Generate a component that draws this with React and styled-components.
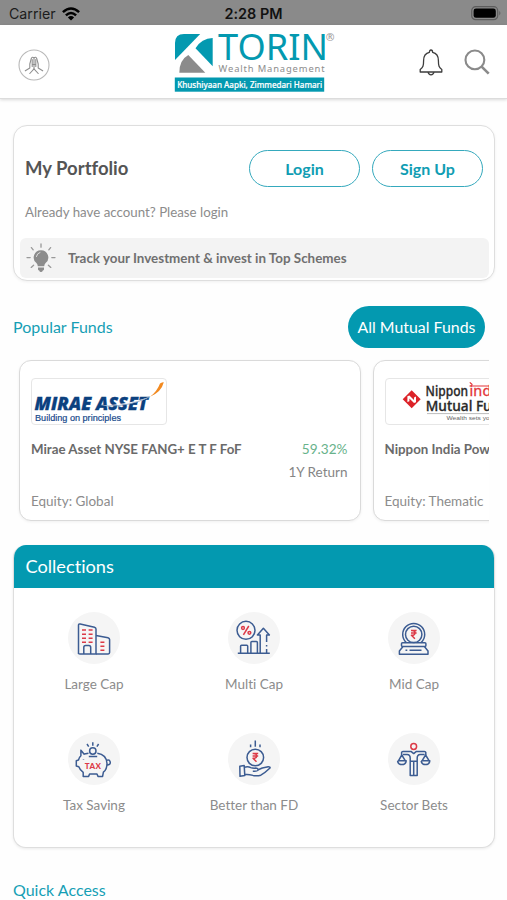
import React from "react";
import styled, { createGlobalStyle } from "styled-components";

const TEAL = "#0399b0";
const NAVY = "#3c5c92";
const RED = "#dc3a47";

const App = () => {
  return (
    <Screen>
      <GlobalStyle />
      <StatusBar>
        <Carrier>
          Carrier
          <WifiIcon />
        </Carrier>
        <Clock>2:28 PM</Clock>
        <BatteryIcon />
      </StatusBar>
      <Header>
        <ProfileBtn>
          <NamasteIcon />
        </ProfileBtn>
        <TorinLogo />
        <HeaderActions>
          <BellIcon />
          <SearchIcon />
        </HeaderActions>
      </Header>
      <Main>
        <Portfolio>
          <PortfolioTop>
            <PortfolioTitle>My Portfolio</PortfolioTitle>
            <OutlineBtn>Login</OutlineBtn>
            <OutlineBtn>Sign Up</OutlineBtn>
          </PortfolioTop>
          <Hint>Already have account? Please login</Hint>
          <Tip>
            <BulbIcon />
            Track your Investment &amp; invest in Top Schemes
          </Tip>
        </Portfolio>
        <SectionHead>
          <SectionTitle>Popular Funds</SectionTitle>
          <AllFundsBtn>All Mutual Funds</AllFundsBtn>
        </SectionHead>
        <FundList>
          {funds.map(({ name, type, value, Logo }) => (
            <FundCard key={name}>
              <LogoBox>
                <Logo />
              </LogoBox>
              <FundRow>
                <FundName>{name}</FundName>
                <FundReturn>{value}</FundReturn>
              </FundRow>
              <Period>1Y Return</Period>
              <FundType>{type}</FundType>
            </FundCard>
          ))}
        </FundList>
        <Collections>
          <CollectionsHead>Collections</CollectionsHead>
          <CollectionsGrid>
            {collections.map(({ label, Icon }) => (
              <Collection key={label}>
                <IconCircle>
                  <Icon />
                </IconCircle>
                <CollectionLabel>{label}</CollectionLabel>
              </Collection>
            ))}
          </CollectionsGrid>
        </Collections>
        <QuickTitle>Quick Access</QuickTitle>
      </Main>
    </Screen>
  );
};

/* header icons */

const WifiIcon = () => (
  <svg width="18" height="14" viewBox="0 0 18 14" fill="none" stroke="#000" strokeWidth="2.5">
    <path d="M.9 5.2Q9-2.2 17.1 5.2" />
    <path d="M3.9 8.4Q9 3.6 14.1 8.4" />
    <path d="M9 13.6L5.9 10.4Q9 7.8 12.1 10.4Z" fill="#000" stroke="none" />
  </svg>
);

const BatteryIcon = () => (
  <svg width="31" height="15" viewBox="0 0 31 15">
    <rect x=".7" y=".7" width="26" height="13" rx="4" fill="none" stroke="#5d5d5d" strokeWidth="1.2" />
    <rect x="2.6" y="2.6" width="22.2" height="9.2" rx="2.4" />
    <path d="M28.3 4.8Q30.5 7.2 28.3 9.6Z" fill="#5d5d5d" />
  </svg>
);

const NamasteIcon = () => (
  <svg width="32" height="32" viewBox="0 0 32 32" fill="none" stroke="#8f8f8f" strokeWidth="1.1" strokeLinecap="round" strokeLinejoin="round">
    <circle cx="16" cy="16" r="15" stroke="#b9b9b9" />
    <path d="M16 8.5V19.5M16 9Q14.2 7.2 13.3 9.5L11.8 15V19L7.3 21.8M16 9Q17.8 7.2 18.7 9.5L20.2 15V19L24.7 21.8" />
    <path d="M14.2 10.5V17.5M17.8 10.5V17.5M14.2 15.5H17.8" />
    <path d="M16 19.8L11.8 24.5M16 19.8L20.2 24.5" />
  </svg>
);

const TorinLogo = () => (
  <svg width="160" height="60" viewBox="0 0 160 60" overflow="visible">
    <path d="M1 28V11Q1 2 10 2H26.2Z" fill={TEAL} />
    <path d="M21.5 16.3Q27.5 6.3 38.7 6V34.3Z" fill={TEAL} />
    <path d="M14.3 23L31.3 40.7H5.3Q5.3 28 14.3 23Z" fill="#8b8b8b" />
    <text x="44" y="27.8" fontFamily="Noto Sans" fontSize="35.6" fill={TEAL} textLength="110" lengthAdjust="spacingAndGlyphs">
      TORIN
    </text>
    <text x="151.8" y="9" fontFamily="Noto Sans" fontSize="10.5" fill="#999">
      ®
    </text>
    <text x="44.6" y="40.2" fontFamily="Noto Sans" fontSize="9.4" fill="#8d8d8d" textLength="106">
      Wealth Management
    </text>
    <rect x=".8" y="45.5" width="149.4" height="14.2" fill={TEAL} />
    <text x="3.2" y="55.8" fontFamily="Noto Sans" fontSize="9" fontWeight="500" fill="#fff" stroke="#fff" strokeWidth=".2" textLength="145" lengthAdjust="spacingAndGlyphs">
      Khushiyaan Aapki, Zimmedari Hamari
    </text>
  </svg>
);

const BellIcon = () => (
  <svg width="24" height="27" viewBox="0 0 24 27" fill="none" stroke="#3d3d3d" strokeWidth="1.3" strokeLinejoin="round">
    <path d="M10.4 3.3Q10.4 1 12 1T13.6 3.3C18 4.2 19.4 7.5 19.4 11.5C19.4 17 20 18.5 22.8 20.5V23H1.2V20.5C4 18.5 4.6 17 4.6 11.5C4.6 7.5 6 4.2 10.4 3.3Z" />
    <path d="M9 23.2Q9.6 25.8 12 25.8T15 23.2" />
  </svg>
);

const SearchIcon = () => (
  <svg width="26" height="26" viewBox="0 0 26 26" fill="none" stroke="#8a8a8a" strokeWidth="2.1">
    <circle cx="10.9" cy="10.9" r="9.4" />
    <path d="M17.6 17.6L24.7 24.7" strokeWidth="2.6" />
  </svg>
);

const BulbIcon = () => (
  <svg width="30" height="30" viewBox="0 0 30 30" stroke="#999" strokeWidth="1.3" strokeLinecap="round">
    <path d="M15 7.2A7.2 7.2 0 0 0 10.4 20Q11.7 21.3 11.8 23.2H18.2Q18.3 21.3 19.6 20A7.2 7.2 0 0 0 15 7.2Z" fill="#8c8c8c" stroke="none" />
    <path d="M12 24.4H18V26.5Q17.6 27.5 16.8 27.5Q16.4 29 15 29T13.2 27.5Q12.4 27.5 12 26.5Z" fill="#8c8c8c" stroke="none" />
    <path d="M10.4 13.5Q11 10.2 14 9.4" fill="none" stroke="#ddd" strokeWidth="1" />
    <path d="M15 1V4.2M5.4 4.6L7.2 6.8M24.6 4.6L22.8 6.8M1 14.6H4.2M25.8 14.6H29M5.2 24.4L7.6 22.2M24.8 24.4L22.4 22.2" />
  </svg>
);

/* fund house logos */

const MiraeLogo = () => (
  <svg width="134" height="45" viewBox="0 0 134 45">
    <text x="2.5" y="31.2" fontFamily="Open Sans" fontSize="17.8" fontWeight="800" fontStyle="italic" fill="#0b417f" stroke="#0b417f" strokeWidth=".3" textLength="113.5" lengthAdjust="spacingAndGlyphs">
      MIRAE ASSET
    </text>
    <path d="M68 26.6Q96 26 118 17.8Q101 27.6 68 26.6Z" fill="#fff" />
    <path d="M74 27Q98 27.6 118 17.7" fill="none" stroke="#7892b2" strokeWidth=".7" />
    <path d="M118 17.8Q125 12.5 128 4.5Q131 2.8 131.8 3.3Q129.5 13 118 17.8Z" fill="#f28a21" />
    <text x="3" y="41.6" fontFamily="Liberation Sans" fontSize="8.8" fill="#174a8c" stroke="#174a8c" strokeWidth=".2" textLength="86" lengthAdjust="spacingAndGlyphs">
      Building on principles
    </text>
  </svg>
);

const NipponLogo = () => (
  <svg width="134" height="45" viewBox="0 0 134 45">
    <path d="M25.7 11.2L34.7 20.2L25.7 29.2L16.7 20.2Z" fill="#dc2329" />
    <path d="M21.4 23V17.2L23.4 16.4L28 21V18.4L30 17.6V23.2L28 24L23.4 19.6V22.2Z" fill="#fff" />
    <text x="39.6" y="17.4" fontFamily="Noto Sans" fontSize="13.6" fontWeight="500" fill="#292929" stroke="#292929" strokeWidth=".3" textLength="42.5" lengthAdjust="spacingAndGlyphs">
      Nippon
    </text>
    <text x="83.5" y="17.4" fontFamily="Noto Sans" fontSize="14.5" fill="#e33439" stroke="#e33439" strokeWidth=".3" textLength="34">
      india
    </text>
    <path d="M83.5 7H118M83.8 3.4L86.4 5.8" stroke="#e33439" strokeWidth="1.2" />
    <text x="39.8" y="31.8" fontFamily="Noto Sans" fontSize="13.6" fontWeight="500" fill="#292929" stroke="#292929" strokeWidth=".3" textLength="83" lengthAdjust="spacingAndGlyphs">
      Mutual Fund
    </text>
    <path d="M41 34.6H122" stroke="#aaa" strokeWidth=".8" />
    <text x="60.5" y="41.2" fontFamily="Liberation Sans" fontSize="6" fill="#666" textLength="60" lengthAdjust="spacingAndGlyphs">
      Wealth sets you free
    </text>
  </svg>
);

/* collection icons, all drawn on the 52px circle */

const LargeCapIcon = () => (
  <CapSvg viewBox="0 0 52 52">
    <path d="M10.5 42V13.2Q10.5 11.6 12.2 12L26.5 15.2Q28 15.6 28 17V42H11.8Q10.5 42 10.5 41" />
    <path d="M28 23.4L40 25.8Q41.6 26.2 41.6 27.6V40.6Q41.6 42 40.2 42H28" />
    <path d="M15.8 42V35.5Q15.8 33.6 17.6 33.6H20.9Q22.7 33.6 22.7 35.5V42" />
    <path
      stroke={RED}
      d="M14 18H18M20.6 18H24.6M14 22.2H18M20.6 22.2H24.6M14 26.3H18M20.6 26.3H24.6M14 30.3H18M20.6 30.3H24.6M32.4 30.2H36.4M32.4 34.2H36.4M32.4 38.2H36.4"
    />
  </CapSvg>
);

const MultiCapIcon = () => (
  <CapSvg viewBox="0 0 52 52">
    <circle cx="18" cy="18.3" r="9" />
    <path d="M9.8 41.3H41.8M12.6 41V34.2Q12.6 33.3 13.5 33.3H18.8Q19.7 33.3 19.7 34.2V41M22.9 41V30.5Q22.9 29.5 23.9 29.5H28.4Q29.4 29.5 29.4 30.5V41" />
    <path d="M32.2 41V23H29.4L35.4 16.3L41.4 23H38.6V30M38.6 33V34.5M38.6 37V41" />
    <path stroke={RED} d="M20.8 14L15.4 22.8" />
    <circle stroke={RED} cx="15" cy="16" r="1.4" />
    <circle stroke={RED} cx="21.4" cy="20.8" r="1.4" />
  </CapSvg>
);

const MidCapIcon = () => (
  <CapSvg viewBox="0 0 52 52">
    <path d="M18.3 30.6A11 11 0 1 1 33.1 30.6" />
    <circle cx="25.7" cy="22.4" r="8.2" />
    <rect x="13.5" y="30.8" width="24.4" height="3.8" rx="1" />
    <path d="M14.8 34.8L11.4 39V42.3H40V39L36.6 34.8M17.5 38.3H19.3M21.5 38.3H33.5" />
    <Rupee x={25.7} y={22.4} />
  </CapSvg>
);

const TaxIcon = () => (
  <CapSvg viewBox="0 0 52 52">
    <path d="M20.5 20.3Q17 20.8 16.2 21.2L12.9 17.2V22.8Q11 24.5 10.5 27L8.3 27.7V33L10.8 33.8Q12 37.3 15.2 39.4V43.4H20.6L21.6 41H29L30 43.4H34.6L35.4 39.2Q39 36.5 39 30.5Q38.5 21.5 29.3 20.3" />
    <path d="M39 27.2Q41.6 26.3 42.2 29T39 32M20.8 23.4H29.2" />
    <circle cx="24.8" cy="18" r="3.2" />
    <path d="M24.8 9.2V12.7M19 11L20.7 13.6M30.6 11L28.9 13.6M15.5 26.2V26.7" />
    <text x="16.8" y="35.7" fontFamily="Lato" fontSize="8" fontWeight="900" fill={RED} stroke="none" textLength="16.2">
      TAX
    </text>
  </CapSvg>
);

const FdIcon = () => (
  <CapSvg viewBox="0 0 52 52">
    <circle cx="27.3" cy="24.5" r="8.3" />
    <path d="M27.3 7.6V13.8M22.6 11.6V14.2M32 11.6V14.2" />
    <path d="M11.8 33.2L16.2 32.6L16.8 42.6L12 43.3Z" />
    <path d="M16.4 34.2Q20 33 22.8 34.6Q24.5 35.3 27.5 35.1Q30 35.1 30.2 37Q30 38.2 24.8 38.2M30.2 36.8L34.3 35L40.2 33.8Q42.5 33.7 42 35Q37.2 39.6 32.8 42.2Q29 43.3 25 42.4Q20 41 16.8 41.6" />
    <Rupee x={27.3} y={24.5} />
  </CapSvg>
);

const SectorIcon = () => (
  <CapSvg viewBox="0 0 52 52">
    <circle stroke={RED} cx="25.7" cy="13.5" r="2.9" />
    <path d="M13.6 22V19.4Q13.8 18.4 15 18.4H23L25.7 20.6L28.4 18.4H36.4Q37.6 18.4 37.8 19.4V22" />
    <path d="M15 21.4H19.2Q22.2 21.5 22.2 25V42.4H29.2V25Q29.2 21.5 32.2 21.4H36.6M22.2 28.2H29.2M25.7 29V42" />
    <path d="M13.8 22L10.4 27.8M13.8 22L17.4 27.8M9.6 27.8H18.2Q17.8 31.6 13.9 31.6T9.6 27.8M37.6 22L34 27.8M37.6 22L41.2 27.8M33.2 27.8H41.8Q41.4 31.6 37.5 31.6T33.2 27.8" />
  </CapSvg>
);

const Rupee = ({ x, y }) => (
  <path
    transform={`translate(${x} ${y})`}
    stroke={RED}
    strokeWidth="1.5"
    d="M-2.7-3.9H2.9M-2.7-1.5H2.9M-1.7-3.9Q1.5-3.9 1.3-1.4T-2.3.8L1.2 4.3"
  />
);

const funds = [
  { name: "Mirae Asset NYSE FANG+ E T F FoF", type: "Equity: Global", value: "59.32%", Logo: MiraeLogo },
  { name: "Nippon India Power & Infra", type: "Equity: Thematic", value: "52.18%", Logo: NipponLogo },
];

const collections = [
  { label: "Large Cap", Icon: LargeCapIcon },
  { label: "Multi Cap", Icon: MultiCapIcon },
  { label: "Mid Cap", Icon: MidCapIcon },
  { label: "Tax Saving", Icon: TaxIcon },
  { label: "Better than FD", Icon: FdIcon },
  { label: "Sector Bets", Icon: SectorIcon },
];

const GlobalStyle = createGlobalStyle`
  * {
    box-sizing: border-box;
  }
  body {
    margin: 0;
    overflow: hidden;
  }
`;

const Screen = styled.div`
  width: 100%;
  height: 900px;
  overflow: hidden;
  background: #fefefe;
  font-family: "Lato", sans-serif;
  font-variant-ligatures: none;
  color: #666;
`;

const StatusBar = styled.div`
  display: grid;
  grid-template-columns: 1fr auto 1fr;
  align-items: center;
  height: 25px;
  padding: 2px 5px 0 9px;
  background: #8a8a8a;
  font-family: "Inter", sans-serif;

  > svg {
    justify-self: end;
  }
`;

const Carrier = styled.div`
  display: flex;
  align-items: center;
  gap: 6px;
  font-size: 14.2px;
  color: #1c1c1c;
`;

const Clock = styled.div`
  padding-right: 4px;
  font-size: 14.4px;
  font-weight: 600;
  color: #111;
`;

const Header = styled.header`
  display: grid;
  grid-template-columns: 1fr 160px 1fr;
  align-items: center;
  height: 74px;
  padding: 0 17px 0 18px;
  background: #fff;
  border-bottom: 1px solid #dcdcdc;
  box-shadow: 0 1px 3px rgba(0, 0, 0, 0.15);
`;

const ProfileBtn = styled.div`
  display: flex;
  padding-top: 6px;
`;

const HeaderActions = styled.div`
  display: flex;
  align-items: center;
  justify-content: flex-end;
  gap: 21px;
  padding-top: 1px;
`;

const Main = styled.main`
  padding: 26px 12px 0 13px;
`;

const Portfolio = styled.section`
  height: 156px;
  padding: 24px 5px 0 6px;
  border: 1px solid #dedede;
  border-radius: 14px;
  background: #fff;
  box-shadow: 0 1px 3px rgba(0, 0, 0, 0.06);
`;

const PortfolioTop = styled.div`
  display: flex;
  align-items: center;
  gap: 12px;
  padding: 0 6px 0 5px;
`;

const PortfolioTitle = styled.h2`
  flex: 1;
  margin: 0;
  padding-bottom: 1px;
  font-size: 18.5px;
  font-weight: 700;
  color: #555;
`;

const OutlineBtn = styled.button`
  width: 111px;
  height: 37px;
  padding: 0;
  border: 1.5px solid #35a9bd;
  border-radius: 19px;
  background: #fff;
  font-family: inherit;
  font-size: 16px;
  font-weight: 700;
  color: #109db3;
`;

const Hint = styled.p`
  margin: 15px 0 16px 5px;
  font-size: 13.3px;
  line-height: 20px;
  color: #8c8c8c;
`;

const Tip = styled.div`
  display: flex;
  align-items: center;
  gap: 12px;
  height: 40px;
  padding-left: 6px;
  border-radius: 6px;
  background: #f3f3f3;
  font-size: 13.4px;
  font-weight: 700;
  color: #707070;
`;

const SectionHead = styled.div`
  display: flex;
  align-items: center;
  justify-content: space-between;
  margin-top: 25px;
  padding-right: 10px;
`;

const SectionTitle = styled.h3`
  margin: 0;
  font-size: 16px;
  font-weight: 400;
  line-height: 20px;
  color: #169fb5;
`;

const AllFundsBtn = styled.button`
  width: 137px;
  height: 42px;
  padding: 0 0 2px;
  border: none;
  border-radius: 21px;
  background: ${TEAL};
  font-family: inherit;
  font-size: 15.9px;
  color: #fff;
`;

const FundList = styled.div`
  display: flex;
  gap: 12px;
  margin: 7px 6px 0 0;
  padding: 5px 0 5px 6px;
  overflow: hidden;
`;

const FundCard = styled.article`
  flex: none;
  width: 341.5px;
  height: 161px;
  padding: 17px 12px 0 11px;
  border: 1px solid #dadada;
  border-radius: 12px;
  background: #fff;
  box-shadow: 0 1px 3px rgba(0, 0, 0, 0.06);
`;

const LogoBox = styled.div`
  width: 136px;
  height: 47px;
  border: 1px solid #e6e6e6;
  border-radius: 4px;
  overflow: hidden;
`;

const FundRow = styled.div`
  display: flex;
  justify-content: space-between;
  margin-top: 14px;
  line-height: 20px;
`;

const FundName = styled.div`
  font-size: 13.3px;
  font-weight: 700;
  white-space: nowrap;
  color: #6a6a6a;
`;

const FundReturn = styled.div`
  font-size: 13.6px;
  color: #68b28b;
`;

const Period = styled.div`
  margin-top: 3px;
  text-align: right;
  font-size: 13.5px;
  line-height: 20px;
  color: #858585;
`;

const FundType = styled.div`
  margin-top: 9px;
  font-size: 13.5px;
  line-height: 20px;
  color: #8c8c8c;
`;

const Collections = styled.section`
  height: 303px;
  margin-top: 19px;
  border: 1px solid #dedede;
  border-top: none;
  border-radius: 13px;
  background: #fff;
  box-shadow: 0 1px 3px rgba(0, 0, 0, 0.08);
  overflow: hidden;
`;

const CollectionsHead = styled.h3`
  margin: 0 -1px;
  padding-left: 12.5px;
  background: ${TEAL};
  font-size: 18.2px;
  font-weight: 400;
  line-height: 43px;
  color: #fff;
`;

const CollectionsGrid = styled.div`
  display: grid;
  grid-template-columns: repeat(3, 1fr);
  row-gap: 38px;
  padding-top: 24px;
`;

const Collection = styled.div`
  display: flex;
  flex-direction: column;
  align-items: center;
  height: 83px;
`;

const IconCircle = styled.div`
  width: 52px;
  height: 52px;
  border-radius: 50%;
  background: #f5f5f5;
`;

const CapSvg = styled.svg`
  display: block;
  width: 52px;
  height: 52px;
  fill: none;
  stroke: ${NAVY};
  stroke-width: 1.5;
  stroke-linejoin: round;
`;

const CollectionLabel = styled.div`
  margin-top: 10px;
  font-size: 13.5px;
  line-height: 20px;
  color: #8c8c8c;
`;

const QuickTitle = styled(SectionTitle)`
  margin-top: 32px;
`;

export default App;
